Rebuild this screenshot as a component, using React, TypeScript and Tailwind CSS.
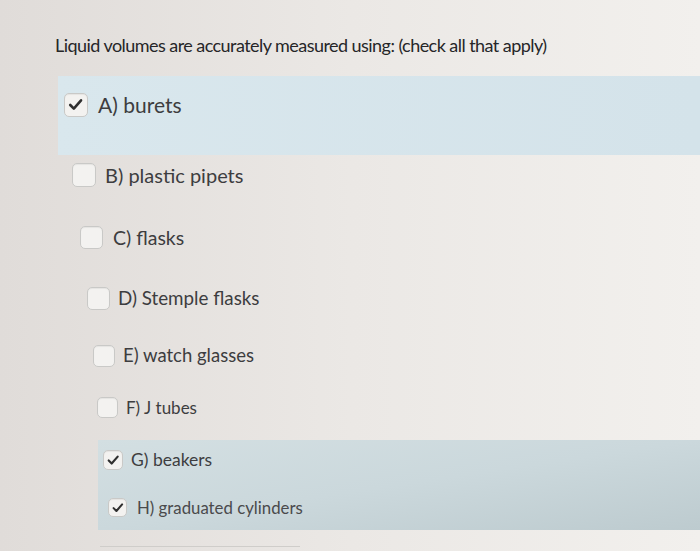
import React from "react";

function Box({ size, checked }: { size: number; checked?: boolean }) {
  return (
    <div
      className="flex shrink-0 items-center justify-center rounded-[5px] border border-[#c9c9c7] bg-[#f3f2f0] shadow-[inset_0_1px_1px_rgba(0,0,0,0.06)]"
      style={{ width: size, height: size }}
    >
      {checked && (
        <svg viewBox="0 0 24 24" width={size * 0.72} height={size * 0.72}>
          <path d="M4.5 12.5 L9.5 17.5 L19.5 6" fill="none" stroke="#2f2f2f" strokeWidth="3.6" strokeLinecap="round" strokeLinejoin="round" />
        </svg>
      )}
    </div>
  );
}

type Opt = { label: string; checked?: boolean; ml: number; size: number; font: number; gap: number; mt: number };

function Row({ o }: { o: Opt }) {
  return (
    <div className="flex items-center" style={{ marginLeft: o.ml, marginTop: o.mt, height: o.size }}>
      <Box size={o.size} checked={o.checked} />
      <span className="whitespace-nowrap text-[#3d3d3f]" style={{ marginLeft: o.gap, fontSize: o.font }}>
        {o.label}
      </span>
    </div>
  );
}

export default function App() {
  return (
    <div
      className="h-[551px] w-[700px] overflow-hidden bg-gradient-to-r from-[#e0dcd9] via-[#ebe8e5] to-[#f2f0ed]"
      style={{ fontFamily: "Lato, 'Noto Sans', sans-serif" }}
    >
      <div className="pt-[33px]">
        <div className="ml-[55px] h-[24px] whitespace-nowrap text-[18px] leading-[24px] tracking-[-0.55px] text-[#262628]">
          Liquid volumes are accurately measured using: (check all that apply)
        </div>

        <div className="mt-[19px] ml-[58px] flex h-[79px] items-start bg-gradient-to-r from-[#d9e7ed] to-[#d4e3ea] pt-[17px] pl-[6px]">
          <Box size={24} checked />
          <span className="ml-[10px] whitespace-nowrap text-[21px] leading-[24px] text-[#3d3d3f]">A) burets</span>
        </div>

        <Row o={{ label: "B) plastic pipets", ml: 72, size: 24, font: 20, gap: 9, mt: 8 }} />
        <Row o={{ label: "C) flasks", ml: 80, size: 23, font: 19.5, gap: 10, mt: 39 }} />
        <Row o={{ label: "D) Stemple flasks", ml: 87, size: 23, font: 18.8, gap: 8, mt: 38 }} />
        <Row o={{ label: "E) watch glasses", ml: 93, size: 22, font: 18.5, gap: 8, mt: 35 }} />
        <Row o={{ label: "F) J tubes", ml: 97, size: 21, font: 17, gap: 8, mt: 30 }} />

        <div className="mt-[22px] ml-[98px] h-[90px] bg-gradient-to-br from-[#d3dfe2] via-[#cbd8dc] to-[#bdcbcf] pt-[10px] pl-[5px]">
          <div className="flex h-[20px] items-center">
            <Box size={20} checked />
            <span className="ml-[8px] whitespace-nowrap text-[17.5px] text-[#3d3d3f]">G) beakers</span>
          </div>
          <div className="mt-[28px] ml-[5px] flex h-[19px] items-center">
            <Box size={19} checked />
            <span className="ml-[10px] whitespace-nowrap text-[16.8px] text-[#4a4a4c]">H) graduated cylinders</span>
          </div>
        </div>
        <div className="mt-[16px] ml-[100px] h-px w-[200px] bg-[#cfcdca]" />
      </div>
    </div>
  );
}
